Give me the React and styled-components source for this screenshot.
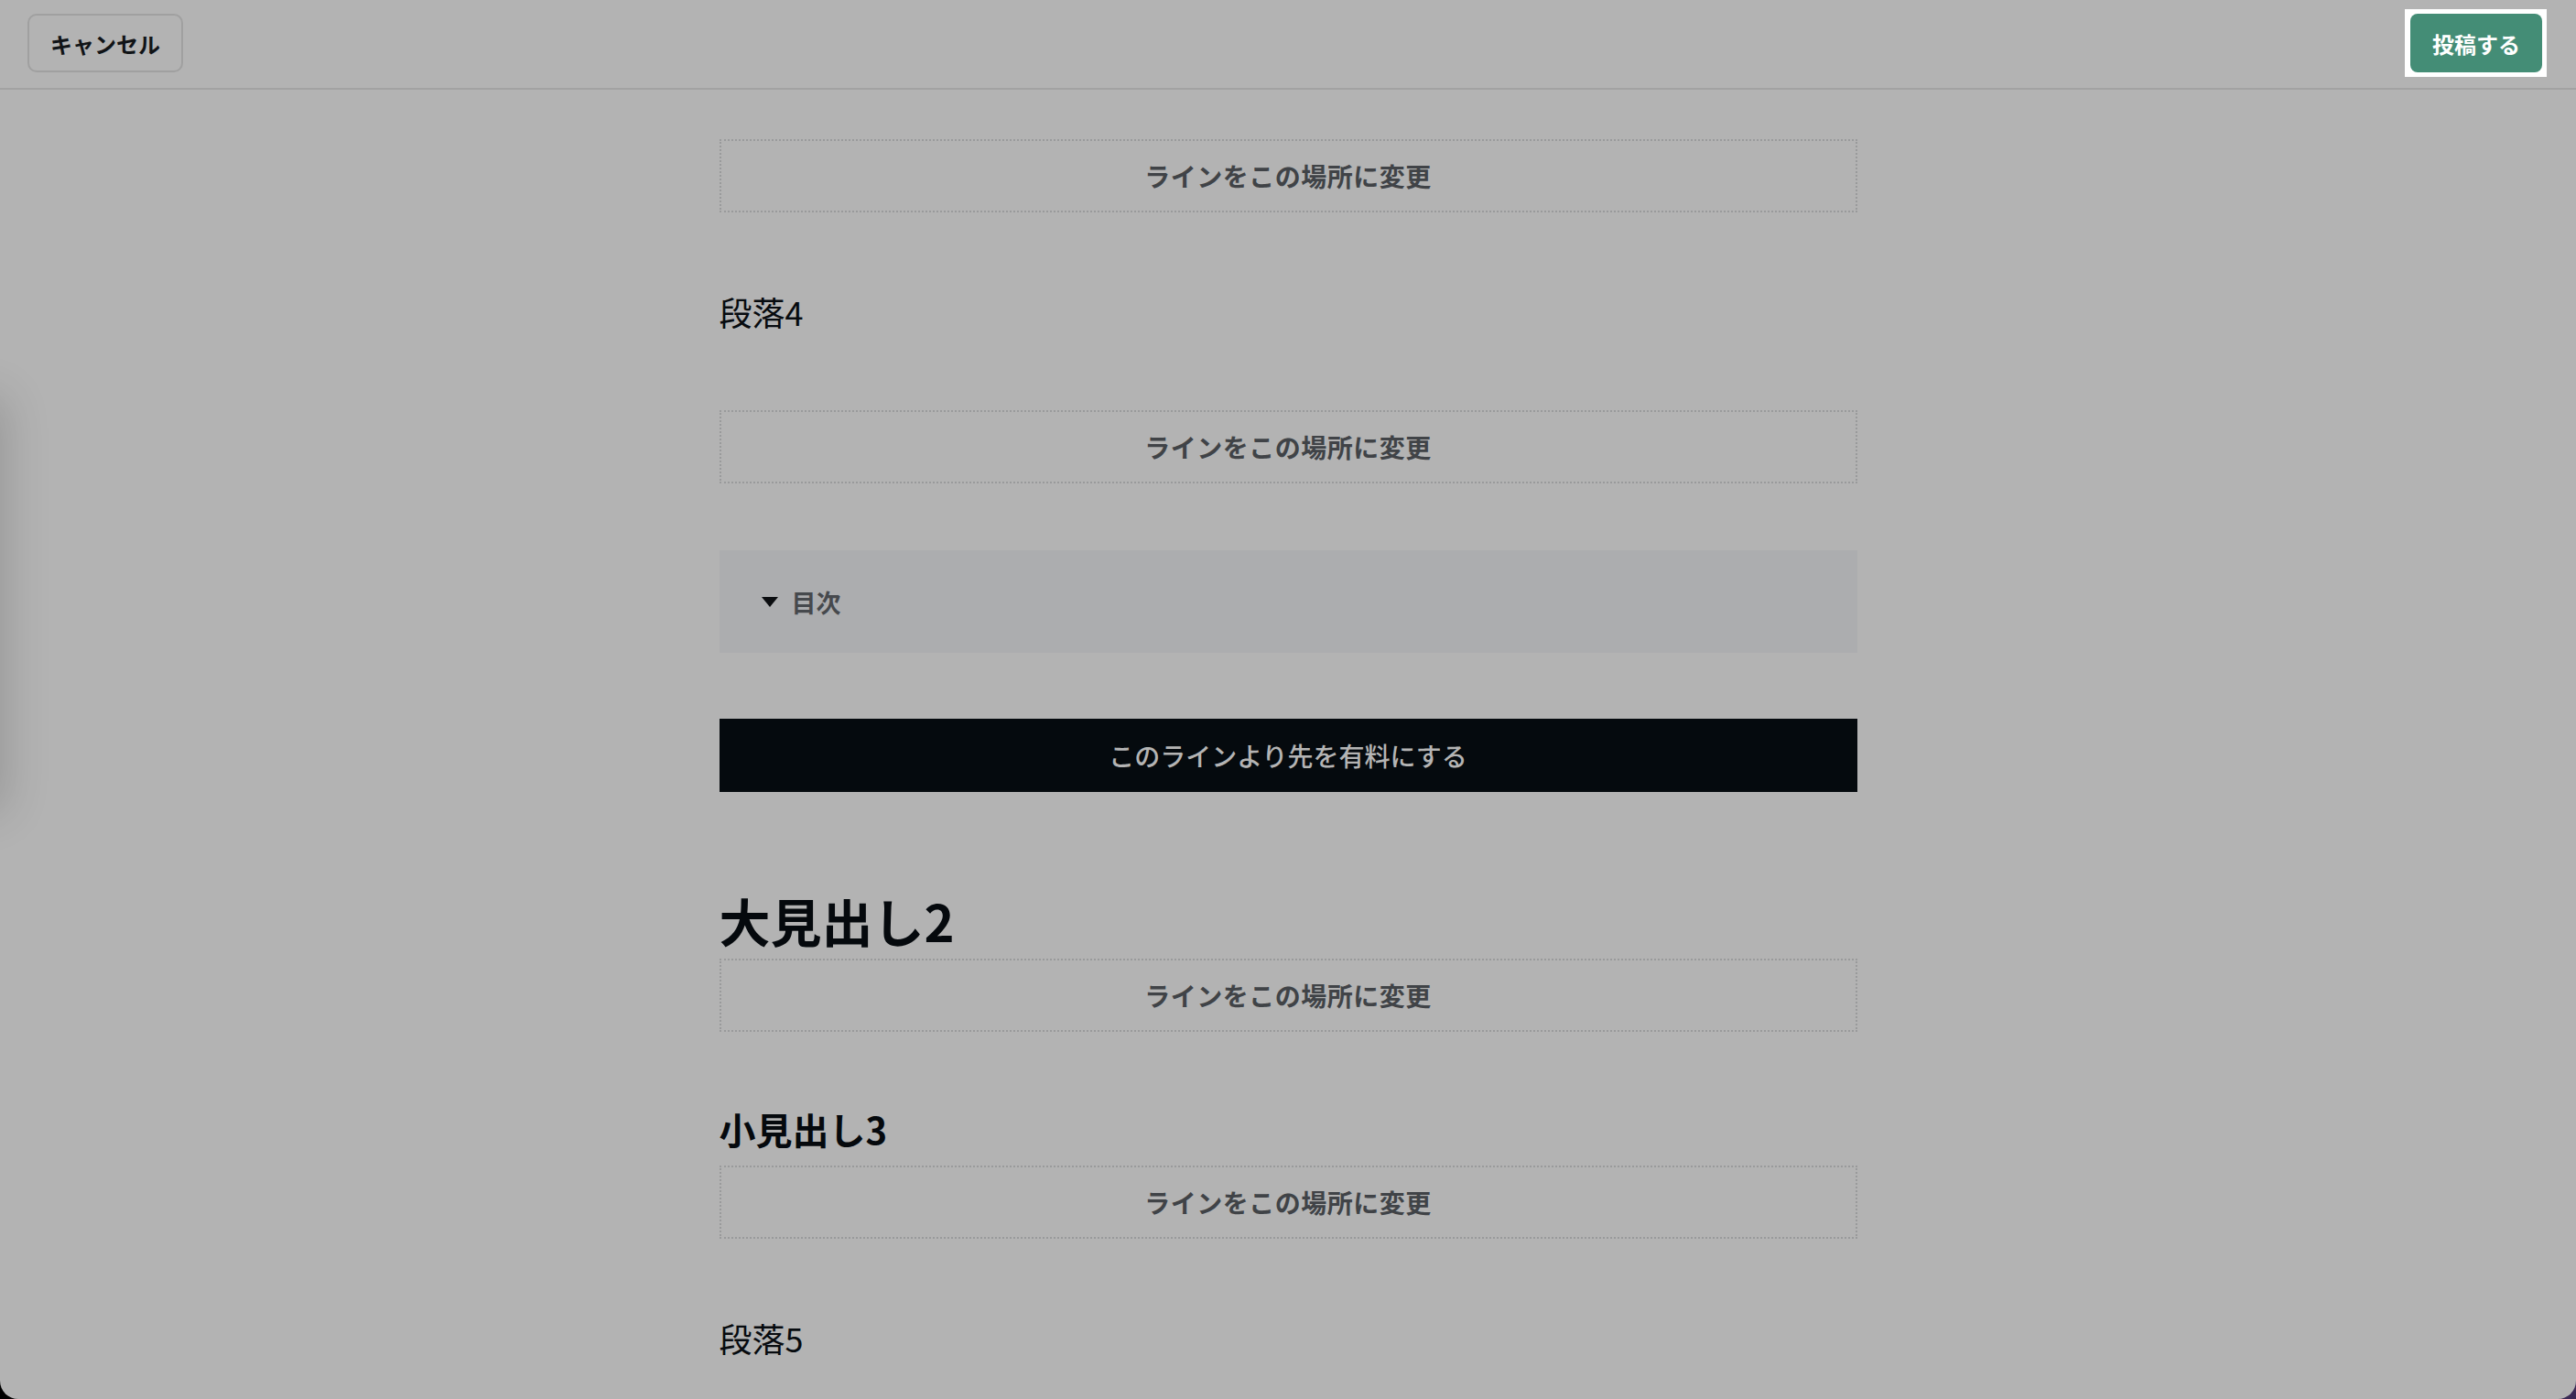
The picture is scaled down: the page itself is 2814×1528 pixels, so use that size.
import React from "react";
import styled, { createGlobalStyle } from "styled-components";

const GlobalStyle = createGlobalStyle`
    html, body {
        margin: 0;
        padding: 0;
        background: linear-gradient(90deg, #000 0%, #140c1c 60%, #3b2a55 100%);
    }
    * {
        box-sizing: border-box;
    }
`;

const blocks = [
    { type: "line" },
    { type: "paragraph", text: "段落4" },
    { type: "line" },
    { type: "toc" },
    { type: "paid" },
    { type: "h2", text: "大見出し2" },
    { type: "line" },
    { type: "h3", text: "小見出し3" },
    { type: "line" },
    { type: "paragraph", text: "段落5" },
];

export default function App() {
    const renderBlock = (block, i) => {
        switch (block.type) {
            case "line":
                return <LineSlot key={i}>ラインをこの場所に変更</LineSlot>;
            case "paragraph":
                return <Paragraph key={i}>{block.text}</Paragraph>;
            case "toc":
                return (
                    <Toc key={i}>
                        <Caret />
                        <TocLabel>目次</TocLabel>
                    </Toc>
                );
            case "paid":
                return <PaidLine key={i}>このラインより先を有料にする</PaidLine>;
            case "h2":
                return <BigHeading key={i}>{block.text}</BigHeading>;
            case "h3":
                return <SmallHeading key={i}>{block.text}</SmallHeading>;
            default:
                return null;
        }
    };

    return (
        <>
            <GlobalStyle />
            <Screen>
                <EdgeShadow />
                <Header>
                    <CancelButton>キャンセル</CancelButton>
                    <FocusRing>
                        <PostButton>投稿する</PostButton>
                    </FocusRing>
                </Header>
                <Body>
                    <Column>{blocks.map(renderBlock)}</Column>
                </Body>
            </Screen>
        </>
    );
}

const Screen = styled.div`
    position: relative;
    height: 100vh;
    overflow: hidden;
    background: #b3b3b3;
    border-radius: 0 0 20px 20px;
    font-family: "Noto Sans CJK JP", "Noto Sans", sans-serif;
    display: flex;
    flex-direction: column;
`;

// 画面左外にあるパネルの影
const EdgeShadow = styled.div`
    position: absolute;
    left: -80px;
    top: 440px;
    width: 80px;
    height: 440px;
    background: #b3b3b3;
    box-shadow: 0 0 50px 6px rgba(0, 0, 0, 0.16);
`;

const Header = styled.header`
    display: flex;
    align-items: center;
    justify-content: space-between;
    height: 98px;
    padding: 0 32px 2px 30px;
    border-bottom: 2px solid #a2a2a2;
    flex-shrink: 0;
`;

const CancelButton = styled.button`
    width: 170px;
    height: 64px;
    border: 2px solid #a0a0a0;
    border-radius: 10px;
    background: transparent;
    color: #111417;
    font-family: inherit;
    font-size: 24px;
    font-weight: 700;
    cursor: pointer;
`;

const FocusRing = styled.div`
    display: flex;
    padding: 5px 5px 5px 6px;
    background: #ffffff;
`;

const PostButton = styled.button`
    width: 144px;
    height: 64px;
    border: none;
    border-radius: 8px;
    background: #448d76;
    color: #ffffff;
    font-family: inherit;
    font-size: 24px;
    font-weight: 700;
    cursor: pointer;
`;

const Body = styled.main`
    flex: 1;
    display: flex;
    justify-content: center;
    padding-top: 54px;
`;

const Column = styled.div`
    width: 1243px;
    display: flex;
    flex-direction: column;
`;

const LineSlot = styled.div`
    height: 80px;
    border: 2px dotted #999a9b;
    display: flex;
    align-items: center;
    justify-content: center;
    color: #404347;
    font-size: 28px;
    font-weight: 700;
    letter-spacing: 0.5px;
`;

const Paragraph = styled.p`
    margin: 76px 0;
    font-size: 36px;
    line-height: 64px;
    font-weight: 400;
    color: #070b0f;
`;

const Toc = styled.div`
    height: 112px;
    margin: 73px 0 72px;
    background: #acadaf;
    display: flex;
    align-items: center;
    gap: 15px;
    padding-left: 46px;
`;

const Caret = styled.span`
    width: 0;
    height: 0;
    border-left: 9px solid transparent;
    border-right: 9px solid transparent;
    border-top: 11px solid #0b0d10;
`;

const TocLabel = styled.span`
    font-size: 27px;
    font-weight: 700;
    color: #46494d;
`;

const PaidLine = styled.div`
    height: 80px;
    background: #050a0e;
    display: flex;
    align-items: center;
    justify-content: center;
    color: #b4b4b4;
    font-size: 28px;
    font-weight: 500;
    letter-spacing: 0;
`;

const BigHeading = styled.h2`
    margin: 98px 0 0;
    font-size: 56px;
    line-height: 84px;
    font-weight: 700;
    color: #05090d;
`;

const SmallHeading = styled.h3`
    margin: 76px 0 10px;
    font-size: 40px;
    line-height: 60px;
    font-weight: 700;
    color: #05090d;
`;
